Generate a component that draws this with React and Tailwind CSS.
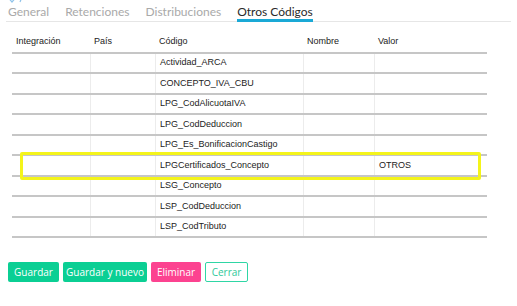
import React from "react";

const rows = [
  { codigo: "Actividad_ARCA" },
  { codigo: "CONCEPTO_IVA_CBU" },
  { codigo: "LPG_CodAlicuotaIVA" },
  { codigo: "LPG_CodDeduccion" },
  { codigo: "LPG_Es_BonificacionCastigo" },
  { codigo: "LPGCertificados_Concepto", valor: "OTROS" },
  { codigo: "LSG_Concepto" },
  { codigo: "LSP_CodDeduccion" },
  { codigo: "LSP_CodTributo" },
];

const cols = "grid grid-cols-[78px_65px_148px_71px_113px]";

export default function App() {
  return (
    <div className="relative w-[517px] h-[306px] overflow-hidden bg-white">
      {/* cropped breadcrumb icon */}
      <svg className="absolute left-[8px] top-[-3px]" width="16" height="7" viewBox="0 0 16 7" fill="none" stroke="#8fc3ea" strokeWidth="1.2">
        <path d="M1 1.5 L4 5 L7 1.5" />
        <path d="M14 0 L12 5" />
      </svg>

      {/* tabs */}
      <div className="ml-[6px] mr-[6px] pt-[4px] pl-[2px] flex gap-[16px] border-b border-[#e6e6e6] font-['Lato',sans-serif] text-[12px]">
        {["General", "Retenciones", "Distribuciones"].map((t) => (
          <div key={t} className="h-[18px] leading-[16px] border-b-2 border-transparent -mb-px text-[#a9a9a9]">{t}</div>
        ))}
        <div className="h-[18px] leading-[16px] border-b-[3px] border-[#1aa9d6] -mb-px text-[#2a2a2a]">Otros Códigos</div>
      </div>

      {/* table */}
      <div className="ml-3 mt-[9.5px] w-[475px] font-['Liberation_Sans',Arial,sans-serif] text-[9px] text-[#222]">
        <div className={`${cols} h-[22px] border-b-2 border-[#c6c6c6] items-center`}>
          {["Integración", "País", "Código", "Nombre", "Valor"].map((h) => (
            <div key={h} className="px-[4px]">{h}</div>
          ))}
        </div>
        {rows.map((r) => (
          <div key={r.codigo} className={`${cols} h-[20.5px] border-b-2 border-[#c6c6c6]`}>
            <div className="px-[4px] flex items-center"></div>
            <div className="px-[4px] flex items-center border-l border-[#ececec]"></div>
            <div className="px-[4px] flex items-center border-l border-[#ececec]">{r.codigo}</div>
            <div className="px-[4px] flex items-center border-l border-[#ececec]"></div>
            <div className="px-[4px] flex items-center border-l border-[#ececec]">{r.valor}</div>
          </div>
        ))}
      </div>

      {/* highlight annotation */}
      <div className="absolute left-[20px] top-[152px] w-[461px] h-[28px] border-[3px] border-[#f4f41a] rounded-[2px]"></div>

      {/* buttons */}
      <div className="ml-2 mt-[24px] flex gap-[4px] font-['Open_Sans',sans-serif] text-[10px]">
        <button className="w-[51px] h-[20px] rounded-[2px] bg-[#0bcf94] text-white">Guardar</button>
        <button className="w-[84px] h-[20px] rounded-[2px] bg-[#0bcf94] text-white">Guardar y nuevo</button>
        <button className="w-[50px] h-[20px] rounded-[2px] bg-[#fc4390] text-white">Eliminar</button>
        <button className="w-[43px] h-[20px] rounded-[2px] border border-[#2fd6a5] bg-white text-[#2fc99a]">Cerrar</button>
      </div>
    </div>
  );
}
